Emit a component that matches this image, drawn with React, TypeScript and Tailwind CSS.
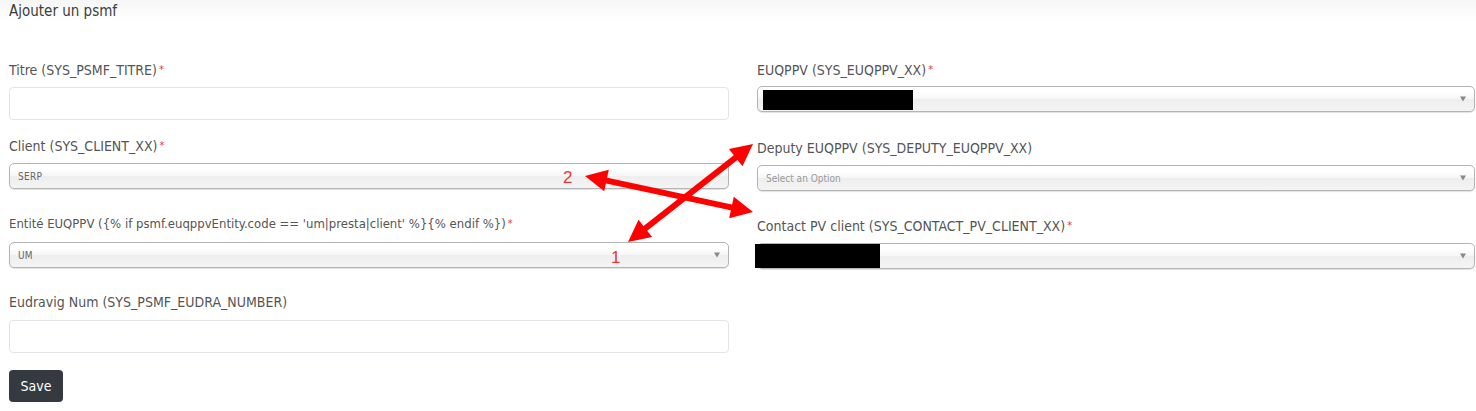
import React from 'react';

const font = "font-['Liberation_Sans_Narrow','DejaVu_Sans_Condensed',Roboto,sans-serif]";

function Label({ text, required, small }: { text: string; required?: boolean; small?: boolean }) {
  return (
    <label className={`block h-4 leading-4 text-[#555] whitespace-nowrap ${small ? 'text-[13px]' : 'text-[14px]'}`}>
      {text}
      {required && <span className="ml-[2px] text-[#e53935] text-[11px] align-top">*</span>}
    </label>
  );
}

function TextInput() {
  return <div className="h-[33px] w-full rounded-[4px] border border-[#e1e5ea] bg-white" />;
}

function Chosen({ value, placeholder, redact, redactClass, arrow = true }: { value?: string; placeholder?: string; redact?: boolean; redactClass?: string; arrow?: boolean }) {
  return (
    <div className="relative h-[26px] w-full rounded-[5px] border border-[#b4b4b4] bg-[linear-gradient(#ffffff_20%,#f6f6f6_50%,#eeeeee_52%,#f4f4f4_100%)] shadow-[0_1px_1px_rgba(0,0,0,0.12)] flex items-center px-[8px]">
      {value && <span className="text-[10px] text-[#666] tracking-wide">{value}</span>}
      {placeholder && <span className="text-[10px] text-[#999]">{placeholder}</span>}
      {redact && <div className={`absolute bg-black ${redactClass}`} />}
      {arrow && (
        <span className="absolute right-[8px] top-1/2 -translate-y-1/2 w-0 h-0 border-l-[3px] border-r-[3px] border-t-[5px] border-l-transparent border-r-transparent border-t-[#888]" />
      )}
    </div>
  );
}

function Arrow({ x1, y1, x2, y2 }: { x1: number; y1: number; x2: number; y2: number }) {
  const dx = x2 - x1;
  const dy = y2 - y1;
  const len = Math.hypot(dx, dy);
  const ux = dx / len;
  const uy = dy / len;
  const px = -uy;
  const py = ux;
  const hl = 22;
  const hw = 11;
  const head = (tx: number, ty: number, dir: number) => {
    const bx = tx - dir * ux * hl;
    const by = ty - dir * uy * hl;
    return `${tx},${ty} ${bx + px * hw},${by + py * hw} ${bx - px * hw},${by - py * hw}`;
  };
  return (
    <g fill="#ff0000" stroke="#ff0000">
      <line x1={x1 + ux * 14} y1={y1 + uy * 14} x2={x2 - ux * 14} y2={y2 - uy * 14} strokeWidth={6} />
      <polygon points={head(x1, y1, -1)} stroke="none" />
      <polygon points={head(x2, y2, 1)} stroke="none" />
    </g>
  );
}

export default function App() {
  return (
    <div className={`relative w-[1476px] h-[411px] bg-white overflow-hidden ${font}`}>
      <div className="h-[22px] bg-[linear-gradient(#f6f6f6,#ffffff)] pl-[9px] pt-[1px]">
        <h1 className="text-[15px] leading-5 font-medium text-[#3d3d3d]">Ajouter un psmf</h1>
      </div>

      <div className="grid grid-cols-[720px_718px] gap-x-[28px] pl-[9px] pt-[40px]">
        <div className="flex flex-col">
          <Label text="Titre (SYS_PSMF_TITRE)" required />
          <div className="mt-[9px]"><TextInput /></div>

          <div className="mt-[18px]"><Label text="Client (SYS_CLIENT_XX)" required /></div>
          <div className="mt-[9px]"><Chosen value="SERP" arrow={false} /></div>

          <div className="mt-[27px]">
            <Label small text="Entité EUQPPV ({% if psmf.euqppvEntity.code == 'um|presta|client' %}{% endif %})" required />
          </div>
          <div className="mt-[10px]"><Chosen value="UM" /></div>

          <div className="mt-[26px]"><Label text="Eudravig Num (SYS_PSMF_EUDRA_NUMBER)" /></div>
          <div className="mt-[10px]"><TextInput /></div>

          <div className="mt-[17px]">
            <button className="h-[32px] w-[54px] rounded-[4px] bg-[#343a40] text-white text-[14px] font-medium">Save</button>
          </div>
        </div>

        <div className="flex flex-col">
          <Label text="EUQPPV (SYS_EUQPPV_XX)" required />
          <div className="mt-[8px]"><Chosen redact redactClass="left-[5px] top-[3px] w-[150px] h-[20px]" /></div>

          <div className="mt-[28px]"><Label text="Deputy EUQPPV (SYS_DEPUTY_EUQPPV_XX)" /></div>
          <div className="mt-[9px]"><Chosen placeholder="Select an Option" /></div>

          <div className="mt-[27px]"><Label text="Contact PV client (SYS_CONTACT_PV_CLIENT_XX)" required /></div>
          <div className="mt-[9px]"><Chosen redact redactClass="-left-[3px] top-0 w-[125px] h-[24px]" /></div>
        </div>
      </div>

      <svg className="absolute inset-0 pointer-events-none" width={1476} height={411}>
        <Arrow x1={628} y1={242} x2={753} y2={144} />
        <Arrow x1={585} y1={176} x2={753} y2={212} />
        <text x={563} y={183} fill="#e53935" fontSize={17} fontFamily="Liberation Sans, sans-serif">2</text>
        <text x={611} y={263} fill="#e53935" fontSize={17} fontFamily="Liberation Sans, sans-serif">1</text>
      </svg>
    </div>
  );
}
